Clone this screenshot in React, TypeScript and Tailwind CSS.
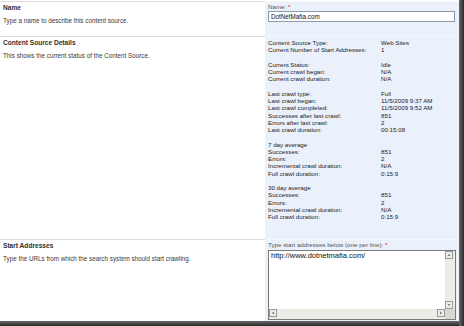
const font = { fontFamily: '"Liberation Sans", Arial, sans-serif' };

type Row = [string, string] | null;

const stats: Row[] = [
  ["Content Source Type:", "Web Sites"],
  ["Current Number of Start Addresses:", "1"],
  null,
  ["Current Status:", "Idle"],
  ["Current crawl began:", "N/A"],
  ["Current crawl duration:", "N/A"],
  null,
  ["Last crawl type:", "Full"],
  ["Last crawl began:", "11/5/2009 9:37 AM"],
  ["Last crawl completed:", "11/5/2009 9:52 AM"],
  ["Successes after last crawl:", "851"],
  ["Errors after last crawl:", "2"],
  ["Last crawl duration:", "00:15:08"],
  null,
  ["7 day average", ""],
  ["Successes:", "851"],
  ["Errors:", "2"],
  ["Incremental crawl duration:", "N/A"],
  ["Full crawl duration:", "0:15:9"],
  null,
  ["30 day average", ""],
  ["Successes:", "851"],
  ["Errors:", "2"],
  ["Incremental crawl duration:", "N/A"],
  ["Full crawl duration:", "0:15:9"],
];

function Section({
  title,
  desc,
  height,
  children,
}: {
  title: string;
  desc: string;
  height: string;
  children: React.ReactNode;
}) {
  return (
    <div className={`flex ${height}`}>
      <div className="w-[265px] shrink-0 border-t border-[#dcdcdc] px-[3px] pt-[2px]">
        <div className="text-[6.6px] leading-[8px] font-bold text-[#2f2f2f]">{title}</div>
        <div className="mt-[5px] text-[6.3px] leading-[7px] text-[#3a3a3a]">{desc}</div>
      </div>
      <div className="flex-1 border-t border-[#f4f7fc] bg-[#ebf1fa] pl-[3px] pr-[3px]">{children}</div>
    </div>
  );
}

function Arrow({ dir }: { dir: "up" | "down" | "left" | "right" }) {
  const pts = {
    up: "2,5 4,3 6,5",
    down: "2,3 4,5 6,3",
    left: "5,2 3,4 5,6",
    right: "3,2 5,4 3,6",
  }[dir];
  return (
    <div className="flex h-[8px] w-[8px] items-center justify-center border border-[#9a9a9a] bg-[#ecebe6]">
      <svg width="8" height="8" viewBox="0 0 8 8">
        <polygon points={pts} fill="#555" />
      </svg>
    </div>
  );
}

export default function App() {
  return (
    <div
      className="h-[326px] w-[464px] overflow-hidden bg-white"
      style={font}
    >
      <div className="flex h-[326px]">
        <div className="flex w-[459px] flex-col">
          <div className="h-[1px]" />
          <Section
            title="Name"
            desc="Type a name to describe this content source."
            height="h-[35px]"
          >
            <div className="pt-[1px] text-[6.2px] leading-[7px] text-[#555]">
              Name: <span className="text-[#e00]">*</span>
            </div>
            <div className="mt-[1px] h-[11px] w-[187px] border border-[#8c9bab] bg-white px-[2px] text-[6.3px] leading-[9px] text-[#111]">
              DotNetMafia.com
            </div>
          </Section>
          <Section
            title="Content Source Details"
            desc="This shows the current status of the Content Source."
            height="h-[203px]"
          >
            <div className="pt-[2px] text-[6.2px] leading-[7.25px] text-[#1a1a1a]">
              {stats.map((r, i) =>
                r ? (
                  <div key={i} className="flex h-[7.25px]">
                    <div className="w-[113px] shrink-0 whitespace-nowrap">{r[0]}</div>
                    <div className="whitespace-nowrap">{r[1]}</div>
                  </div>
                ) : (
                  <div key={i} className="h-[7.25px]" />
                ),
              )}
            </div>
          </Section>
          <Section
            title="Start Addresses"
            desc="Type the URLs from which the search system should start crawling."
            height="flex-1"
          >
            <div className="pt-[1px] text-[6.2px] leading-[7px] text-[#555]">
              Type start addresses below (one per line): <span className="text-[#e00]">*</span>
            </div>
            <div className="mt-[2px] flex h-[70px] w-[188px] flex-col border border-[#7a7a7a] bg-white">
              <div className="flex flex-1">
                <div className="flex-1 px-[2px] pt-[1px] text-[7.5px] leading-[8px] text-[#111]">
                  http://www.dotnetmafia.com/
                </div>
                <div className="flex w-[10px] flex-col justify-between bg-[#ecebe6]">
                  <Arrow dir="up" />
                  <Arrow dir="down" />
                </div>
              </div>
              <div className="flex h-[10px]">
                <div className="flex flex-1 justify-between bg-[#ecebe6]">
                  <Arrow dir="left" />
                  <Arrow dir="right" />
                </div>
                <div className="w-[10px] bg-[#d8d7d2]" />
              </div>
            </div>
          </Section>
          <div className="h-[5px] bg-gradient-to-b from-[#6a6a6a] to-[#2a2a2a]" />
        </div>
        <div className="w-[5px] bg-gradient-to-r from-[#6a6a6a] to-[#2a2a2a]" />
      </div>
    </div>
  );
}
